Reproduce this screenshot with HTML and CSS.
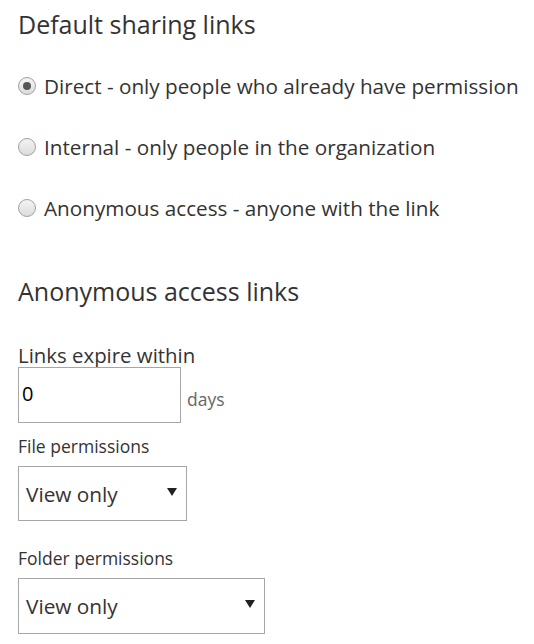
FILE: index.html
```html
<!DOCTYPE html>
<html lang="en">
<head>
  <meta charset="UTF-8">
  <title>Sharing settings</title>
  <link rel="stylesheet" href="styles.css">
</head>
<body>
  <div class="settings">
    <h2 class="section-title">Default sharing links</h2>
    <div class="radio-list">
      <label class="radio-row"><input type="radio" name="linktype" checked><span>Direct - only people who already have permission</span></label>
      <label class="radio-row"><input type="radio" name="linktype"><span>Internal - only people in the organization</span></label>
      <label class="radio-row"><input type="radio" name="linktype"><span>Anonymous access - anyone with the link</span></label>
    </div>

    <h2 class="section-title section-title--second">Anonymous access links</h2>

    <div class="field">
      <div class="field-label field-label--large">Links expire within</div>
      <div class="expire-row">
        <input class="text-input" type="text" value="0">
        <span class="unit">days</span>
      </div>
    </div>

    <div class="field">
      <div class="field-label">File permissions</div>
      <div class="select select--short">
        <span>View only</span>
        <span class="arrow"></span>
      </div>
    </div>

    <div class="field field--gap">
      <div class="field-label">Folder permissions</div>
      <div class="select select--wide">
        <span>View only</span>
        <span class="arrow"></span>
      </div>
    </div>
  </div>
</body>
</html>
```

FILE: styles.css
```css
body {
  margin: 0;
  font-family: "Open Sans", "Noto Sans", sans-serif;
  color: #333;
  background: #fff;
}
.settings {
  padding: 6px 0 0 18px;
}
.section-title {
  margin: 0;
  font-size: 25px;
  font-weight: 400;
  line-height: 36px;
  color: #333;
}
.section-title--second {
  margin-top: 53px;
}
.radio-list {
  margin-top: 32px;
  display: flex;
  flex-direction: column;
  gap: 37px;
}
.radio-row {
  display: flex;
  align-items: center;
  gap: 8px;
  font-size: 20.7px;
  line-height: 24px;
  color: #333;
}
.radio-row input {
  appearance: none;
  margin: 0;
  width: 18px;
  height: 18px;
  border-radius: 50%;
  border: 1px solid #a0a0a0;
  background: linear-gradient(#f4f4f4, #dcdcdc);
  display: grid;
  place-items: center;
}
.radio-row input:checked::after {
  content: "";
  width: 8px;
  height: 8px;
  border-radius: 50%;
  background: #555;
}
.field {
  display: flex;
  flex-direction: column;
}
.field-label {
  font-size: 17.5px;
  line-height: 22px;
  margin: 12px 0 9px;
}
.field-label--large {
  font-size: 20.4px;
  line-height: 24px;
  margin: 34px 0 0;
}
.field--gap {
  margin-top: 14px;
}
.expire-row {
  display: flex;
  align-items: center;
  gap: 6px;
}
.text-input {
  box-sizing: border-box;
  width: 163px;
  height: 56px;
  border: 1px solid #a6a6a6;
  padding: 0 3px 4px;
  font: inherit;
  font-size: 20px;
  color: #000;
  outline: none;
}
.unit {
  margin-top: 8px;
  font-size: 17.5px;
  color: #666;
}
.select {
  box-sizing: border-box;
  height: 55px;
  border: 1px solid #a6a6a6;
  display: flex;
  align-items: center;
  justify-content: space-between;
  padding: 0 9px 0 7px;
  font-size: 20.8px;
  color: #333;
}
.select--short {
  width: 169px;
}
.select--wide {
  width: 247px;
  height: 56px;
}
.arrow {
  width: 0;
  height: 0;
  border-left: 5px solid transparent;
  border-right: 5px solid transparent;
  border-top: 8px solid #222;
  margin-top: -4px;
}
```
